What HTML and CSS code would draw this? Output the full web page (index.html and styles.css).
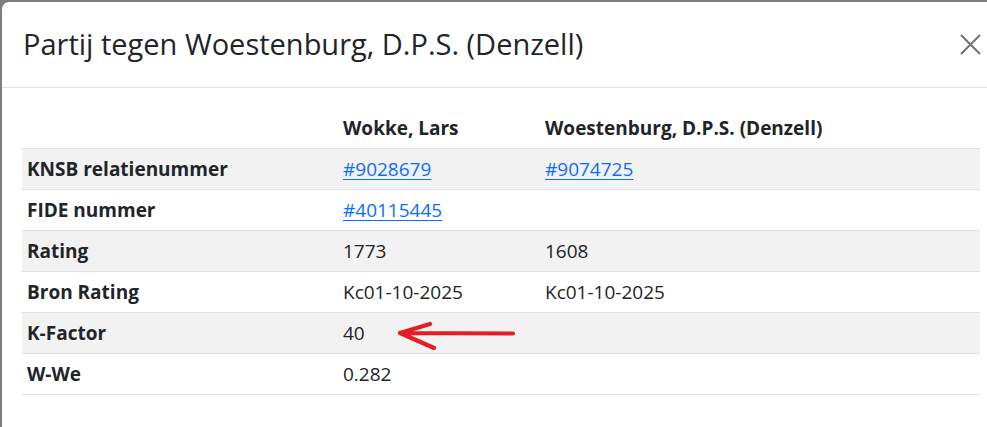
FILE: index.html
```html
<!DOCTYPE html>
<html lang="nl">
<head>
<meta charset="utf-8">
<title>Partij tegen Woestenburg</title>
<link rel="stylesheet" href="styles.css">
</head>
<body>
<div class="backdrop">
  <div class="modal">
    <div class="modal-header">
      <h4 class="modal-title">Partij tegen Woestenburg, D.P.S. (Denzell)</h4>
      <button class="btn-close" aria-label="Sluiten">
        <svg width="21" height="21" viewBox="0 0 21 21"><path d="M1 1 L20 20 M20 1 L1 20" stroke="#717171" stroke-width="2" fill="none"/></svg>
      </button>
    </div>
    <div class="modal-body">
      <table class="table">
        <colgroup><col class="c1"><col class="c2"><col class="c3"></colgroup>
        <thead>
          <tr><th></th><th>Wokke, Lars</th><th>Woestenburg, D.P.S. (Denzell)</th></tr>
        </thead>
        <tbody>
          <tr class="odd"><th>KNSB relatienummer</th><td><a href="#">#9028679</a></td><td><a href="#">#9074725</a></td></tr>
          <tr><th>FIDE nummer</th><td><a href="#">#40115445</a></td><td></td></tr>
          <tr class="odd"><th>Rating</th><td>1773</td><td>1608</td></tr>
          <tr><th>Bron Rating</th><td>Kc01-10-2025</td><td>Kc01-10-2025</td></tr>
          <tr class="odd"><th>K-Factor</th><td>40</td><td></td></tr>
          <tr><th>W-We</th><td>0.282</td><td></td></tr>
        </tbody>
      </table>
      <svg class="arrow" width="130" height="40" viewBox="0 0 130 40"><path d="M4 16 L117 16.5 M4 16 L34 7 M4 16 L38 31" stroke="#e41e22" stroke-width="4.2" stroke-linecap="round" fill="none"/></svg>
    </div>
  </div>
</div>
</body>
</html>
```
FILE: styles.css
```css
html, body {
  margin: 0;
  padding: 0;
  height: 100%;
  overflow: hidden;
}
body {
  background: #7d7d7d;
  font-family: "Segoe UI", "Open Sans", "Noto Sans", sans-serif;
  color: #212529;
}
.backdrop {
  padding: 2px 0 0 2px;
  height: 100%;
  box-sizing: border-box;
}
.modal {
  background: #fff;
  width: 1010px;
  height: 100%;
  border-radius: 7px 0 0 0;
  position: relative;
}
.modal-header {
  height: 85px;
  border-bottom: 1px solid #dee2e6;
  display: flex;
  align-items: center;
  justify-content: space-between;
  padding: 0 0 0 21px;
  box-sizing: content-box;
}
.modal-title {
  margin: 0;
  font-size: 29px;
  font-weight: 500;
  line-height: 1.2;
  padding-bottom: 1px;
}
.btn-close {
  background: none;
  border: 0;
  padding: 0;
  margin-right: 31px;
  width: 21px;
  height: 21px;
  display: flex;
}
.modal-body {
  padding: 20px 0 0 20px;
  position: relative;
}
.table {
  border-collapse: collapse;
  width: 958px;
  font-size: 19px;
  line-height: 30px;
}
.c1 { width: 316px; }
.c2 { width: 202px; }
.table th, .table td {
  text-align: left;
  padding: 5px 5px;
  border-bottom: 1px solid #dee2e6;
  vertical-align: top;
}
.table th { font-weight: 700; }
.table td { font-weight: 400; }
.odd th, .odd td { background: #f2f2f2; }
.table a {
  color: #0d6efd;
  text-decoration: underline;
  text-underline-offset: 3px;
  text-decoration-thickness: 1px;
}
.arrow {
  position: absolute;
  left: 394px;
  top: 229px;
}
```
